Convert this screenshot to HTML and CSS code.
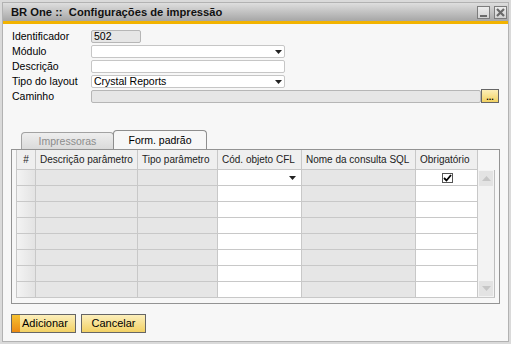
FILE: index.html
```html
<!DOCTYPE html>
<html lang="pt">
<head>
<meta charset="utf-8">
<title>BR One :: Configurações de impressão</title>
<link rel="stylesheet" href="styles.css">
</head>
<body>
<div class="window">
  <div class="frame">
    <div class="titlebar">
      <span class="title">BR One ::&nbsp; Configurações de impressão</span>
      <div class="tb-buttons">
        <span class="tb-btn"><svg width="11" height="11" viewBox="0 0 11 11"><rect x="2" y="8" width="7" height="2" fill="#6a6a6a"/></svg></span>
        <span class="tb-btn"><svg width="11" height="11" viewBox="0 0 11 11"><path d="M2 2 L9 9 M9 2 L2 9" stroke="#6a6a6a" stroke-width="2.2"/></svg></span>
      </div>
    </div>
    <div class="accent"></div>
    <div class="content">
      <div class="form">
        <div class="label">Identificador</div>
        <div class="fieldcell"><div class="field gray short">502</div></div>
        <div class="label">Módulo</div>
        <div class="fieldcell"><div class="field mid"><span class="ftext"></span><svg class="arrow" width="7" height="4" viewBox="0 0 7 4"><path d="M0 0 H7 L3.5 4 Z" fill="#222"/></svg></div></div>
        <div class="label">Descrição</div>
        <div class="fieldcell"><div class="field mid"></div></div>
        <div class="label">Tipo do layout</div>
        <div class="fieldcell"><div class="field mid"><span class="ftext">Crystal Reports</span><svg class="arrow" width="7" height="4" viewBox="0 0 7 4"><path d="M0 0 H7 L3.5 4 Z" fill="#222"/></svg></div></div>
        <div class="label">Caminho</div>
        <div class="fieldcell"><div class="field gray long"></div><span class="browse">...</span></div>
      </div>

      <div class="tabs">
        <span class="tab inactive">Impressoras</span>
        <span class="tab active">Form. padrão</span>
      </div>
      <div class="panel">
        <div class="grid">
          <div class="hd first center">#</div>
          <div class="hd">Descrição parâmetro</div>
          <div class="hd">Tipo parâmetro</div>
          <div class="hd">Cód. objeto CFL</div>
          <div class="hd">Nome da consulta SQL</div>
          <div class="hd">Obrigatório</div>
          <div class="hd-empty"></div>

          <div class="c num"></div><div class="c g"></div><div class="c g"></div>
          <div class="c w dd"><svg width="7" height="4" viewBox="0 0 7 4"><path d="M0 0 H7 L3.5 4 Z" fill="#222"/></svg></div>
          <div class="c g"></div>
          <div class="c w chk"><span class="checkbox"><svg width="9" height="8" viewBox="0 0 9 8"><path d="M1 4 L3.5 6.5 L8 1" stroke="#000" stroke-width="1.8" fill="none"/></svg></span></div>
          <div class="scroll">
            <span class="sbtn"><svg width="9" height="5" viewBox="0 0 9 5"><path d="M0 5 H9 L4.5 0 Z" fill="#c6c6c6"/></svg></span>
            <span class="sbtn"><svg width="9" height="5" viewBox="0 0 9 5"><path d="M0 0 H9 L4.5 5 Z" fill="#c6c6c6"/></svg></span>
          </div>

          <div class="c num"></div><div class="c g"></div><div class="c g"></div><div class="c w"></div><div class="c g"></div><div class="c w"></div>
          <div class="c num"></div><div class="c g"></div><div class="c g"></div><div class="c w"></div><div class="c g"></div><div class="c w"></div>
          <div class="c num"></div><div class="c g"></div><div class="c g"></div><div class="c w"></div><div class="c g"></div><div class="c w"></div>
          <div class="c num"></div><div class="c g"></div><div class="c g"></div><div class="c w"></div><div class="c g"></div><div class="c w"></div>
          <div class="c num"></div><div class="c g"></div><div class="c g"></div><div class="c w"></div><div class="c g"></div><div class="c w"></div>
          <div class="c num"></div><div class="c g"></div><div class="c g"></div><div class="c w"></div><div class="c g"></div><div class="c w"></div>
          <div class="c num"></div><div class="c g"></div><div class="c g"></div><div class="c w"></div><div class="c g"></div><div class="c w"></div>
        </div>
      </div>

      <div class="actions">
        <span class="btn primary"><span class="strip"></span><span class="btext">Adicionar</span></span>
        <span class="btn"><span class="btext">Cancelar</span></span>
      </div>
    </div>
  </div>
</div>
</body>
</html>
```

FILE: styles.css
```css
* { box-sizing: border-box; }
html, body { margin: 0; padding: 0; }
body {
  width: 511px;
  height: 344px;
  background: #ececec;
  font-family: "Liberation Sans", Arial, sans-serif;
  font-size: 10.5px;
  color: #000;
  overflow: hidden;
}
.window {
  width: 511px;
  height: 344px;
  border: 2px solid #dadada;
}
.frame {
  height: 100%;
  border: 1px solid #b2b2b2;
  background: #f7f7f7;
  display: flex;
  flex-direction: column;
}
.titlebar {
  height: 18px;
  flex: none;
  background: linear-gradient(#dedede, #a6a6a6);
  display: flex;
  align-items: center;
  justify-content: space-between;
  padding: 0 1px 0 8px;
}
.title {
  font-weight: bold;
  font-size: 11.2px;
  color: #111;
  white-space: pre;
}
.tb-buttons { display: flex; gap: 4px; }
.tb-btn {
  width: 13px;
  height: 13px;
  border: 1px solid #7c7c7c;
  background: linear-gradient(#ececec, #d2d2d2);
  display: flex;
  align-items: center;
  justify-content: center;
}
.accent { height: 3px; flex: none; background: #f2b300; }
.content {
  flex: 1;
  padding: 6px 8px 0 8px;
  display: flex;
  flex-direction: column;
}
.form {
  display: grid;
  grid-template-columns: 80px auto;
  grid-auto-rows: 13px;
  row-gap: 2px;
}
.label {
  line-height: 13px;
  padding-left: 1px;
  white-space: nowrap;
}
.fieldcell { display: flex; }
.field {
  height: 13px;
  border: 1px solid #c6c6c6;
  border-radius: 2px;
  background: #fff;
  display: flex;
  align-items: center;
  padding-left: 2px;
  line-height: 11px;
}
.field.gray { background: #e6e6e6; border-color: #b6b6b6; }
.field.short { width: 50px; }
.field.mid { width: 194px; }
.field.long { width: 390px; }
.ftext { flex: 1; }
.arrow { margin-right: 2px; }
.browse {
  width: 18px;
  height: 14px;
  margin-top: -1px;
  border: 1px solid #666;
  background: linear-gradient(#fcefb8, #f2d262);
  font-size: 9px;
  font-weight: bold;
  line-height: 14px;
  text-align: center;
}
.tabs {
  margin-top: 27px;
  height: 20px;
  margin-bottom: -1px;
  display: flex;
  align-items: flex-start;
  padding-left: 10px;
}
.tab {
  display: flex;
  align-items: center;
  justify-content: center;
  border: 1px solid #8e8e8e;
  border-bottom: none;
  border-radius: 4px 4px 0 0;
}
.tab.inactive {
  margin-top: 2px;
  width: 93px;
  height: 17px;
  color: #8c8c8c;
  background: linear-gradient(#eeeeee, #dadada);
  border-color: #a2a2a2;
}
.tab.active {
  width: 94px;
  height: 20px;
  margin-left: -1px;
  background: #f7f7f7;
  padding-bottom: 2px;
}
.panel {
  height: 155px;
  border: 1px solid #939393;
  padding: 0 4px 4px 4px;
}
.grid {
  display: grid;
  grid-template-columns: 20px 102px 80px 84px 114px 62px 17px;
  grid-template-rows: 20px repeat(8, 16px);
}
.hd {
  background: #efefef;
  border-right: 1px solid #c8c8c8;
  border-bottom: 1px solid #c8c8c8;
  padding-left: 4px;
  display: flex;
  align-items: center;
  white-space: nowrap;
  overflow: hidden;
  color: #222;
  font-size: 10px;
}
.hd.first { border-left: 1px solid #c8c8c8; }
.hd.center { justify-content: center; padding-left: 0; }
.c {
  border-right: 1px solid #c8c8c8;
  border-bottom: 1px solid #c8c8c8;
}
.c.num {
  border-left: 1px solid #c8c8c8;
  background: linear-gradient(to right, #f3f3f3, #e3e3e3);
}
.c.g { background: #e6e6e6; }
.c.w { background: #fff; }
.c.dd { display: flex; align-items: center; justify-content: flex-end; padding-right: 5px; }
.c.chk { display: flex; align-items: center; justify-content: center; padding-left: 2px; }
.checkbox {
  width: 11px;
  height: 10px;
  border: 1px solid #555;
  background: #fff;
  display: flex;
  align-items: center;
  justify-content: center;
}
.scroll {
  grid-column: 7;
  grid-row: 2 / span 8;
  background: #f3f3f3;
  border-right: 1px solid #bdbdbd;
  border-bottom: 1px solid #c8c8c8;
  display: flex;
  flex-direction: column;
  justify-content: space-between;
  padding: 1px;
}
.sbtn {
  width: 14px;
  height: 15px;
  background: #e3e3e3;
  display: flex;
  align-items: center;
  justify-content: center;
}
.actions {
  margin-top: 10px;
  display: flex;
  gap: 5px;
}
.btn {
  width: 65px;
  height: 19px;
  border: 1px solid #666;
  background: linear-gradient(#fcefbc, #f2d164);
  display: flex;
  align-items: center;
  justify-content: center;
  font-size: 11px;
}
.btn.primary { justify-content: flex-start; }
.strip {
  width: 8px;
  height: 100%;
  background: linear-gradient(#f6c232, #ec8a12);
  margin-right: 2px;
}
.btext { line-height: 17px; }
```
